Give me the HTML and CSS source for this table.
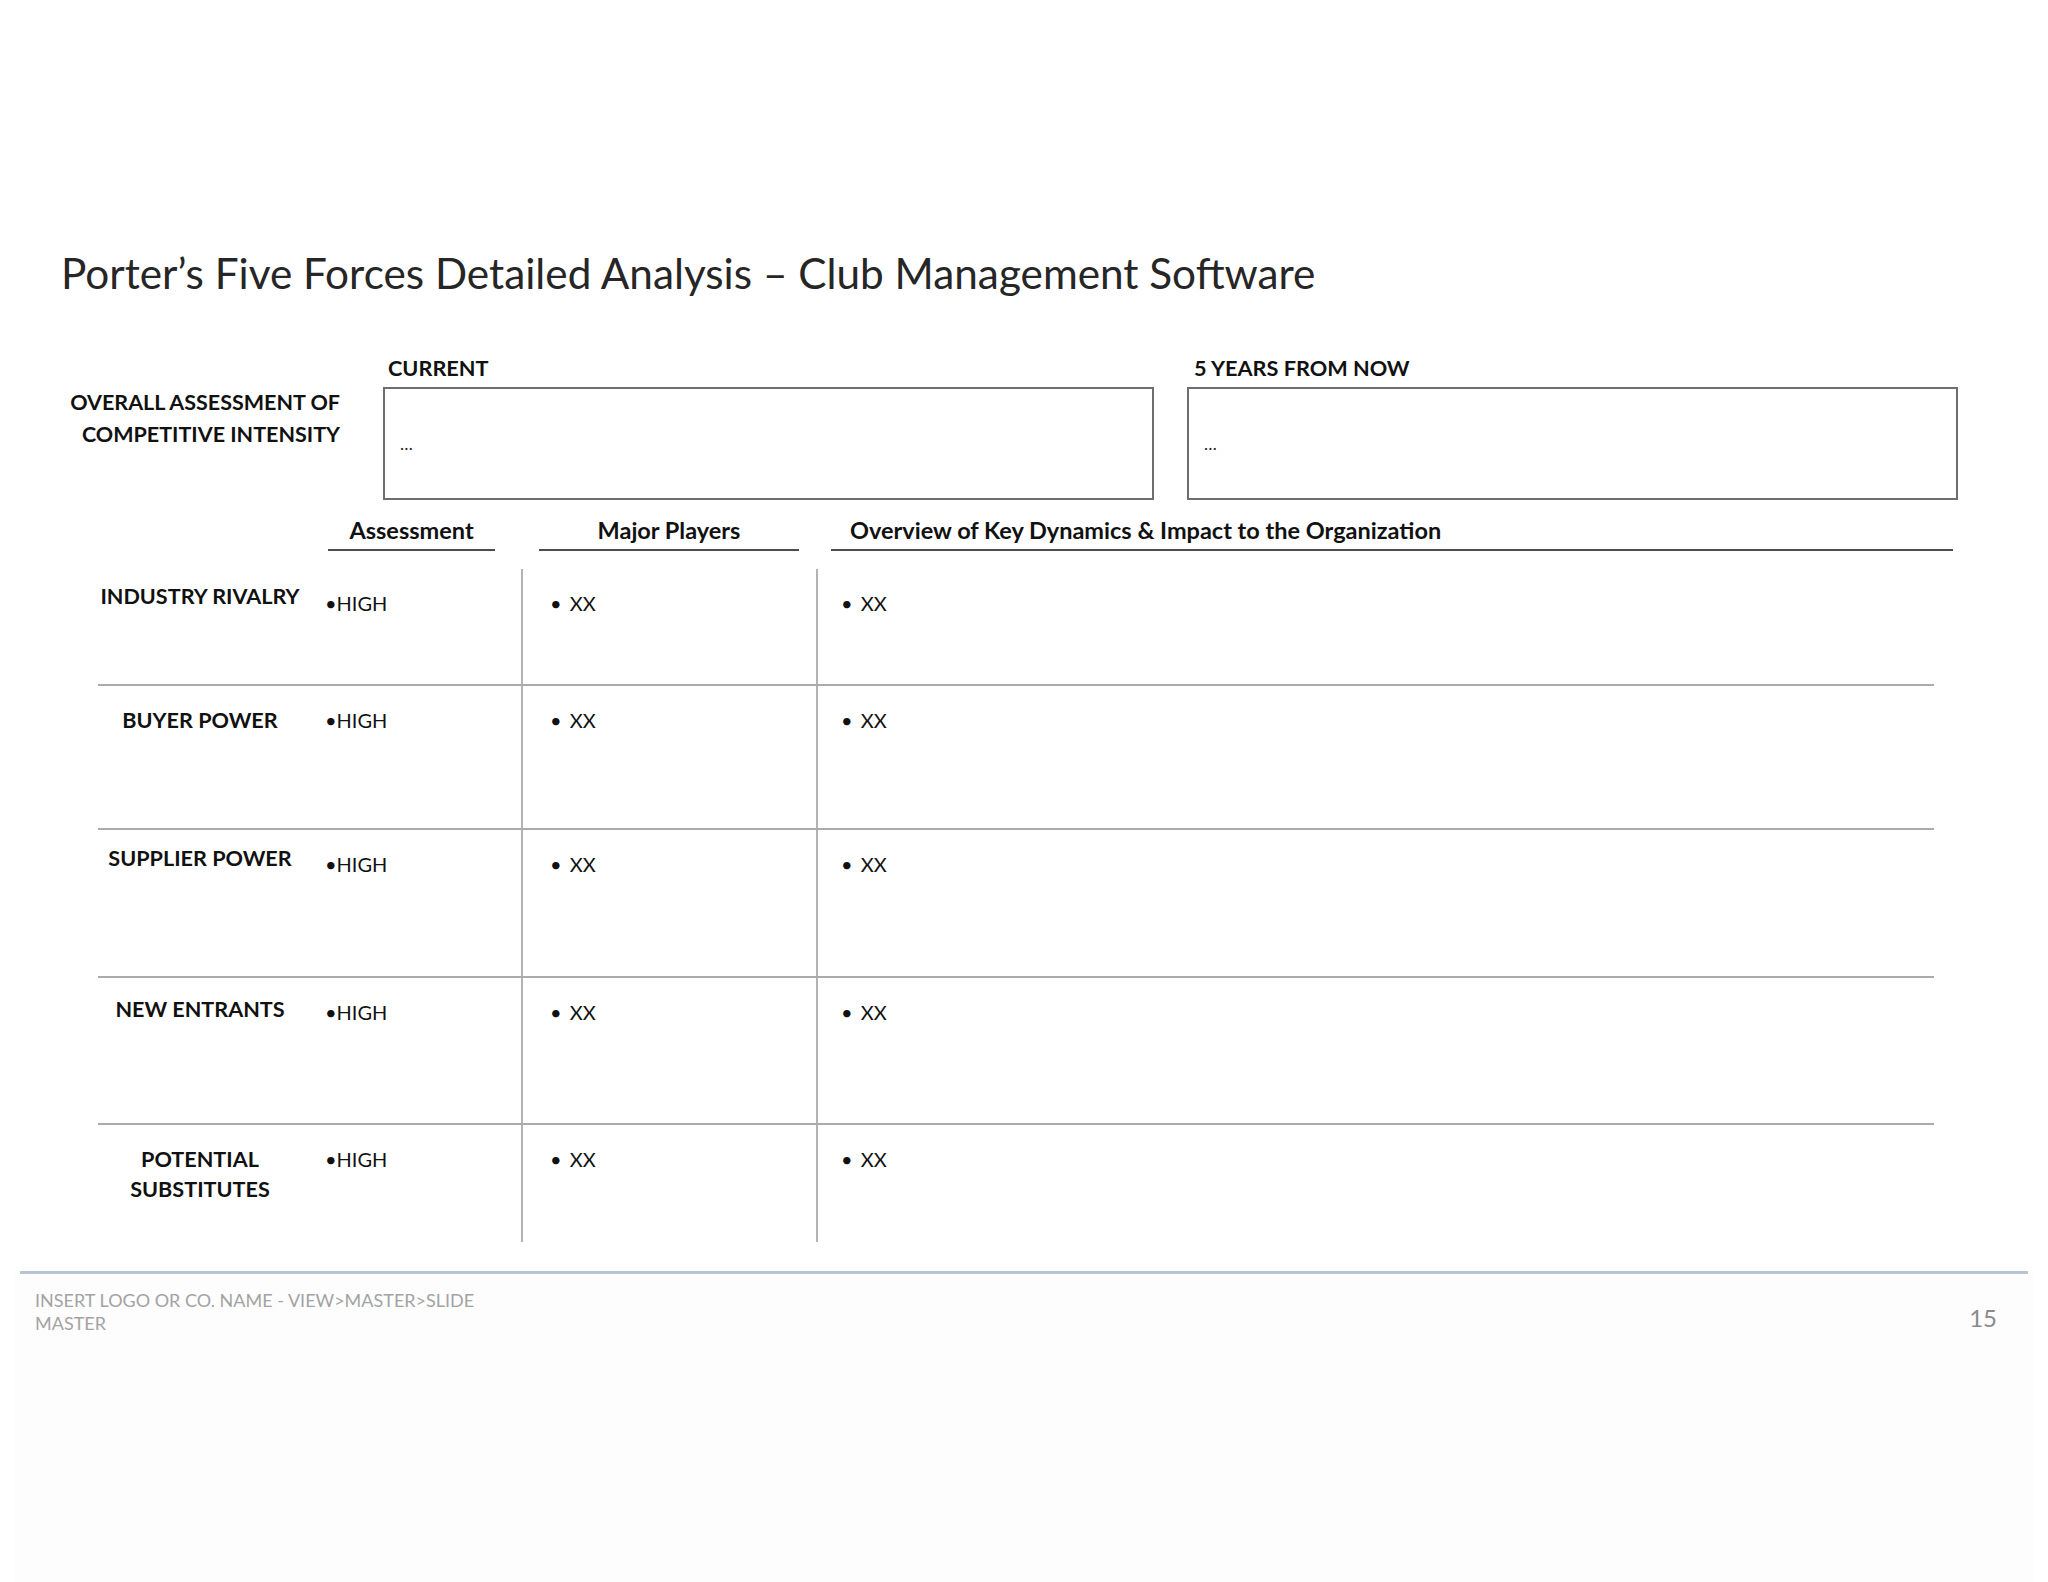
FILE: index.html
```html
<!DOCTYPE html>
<html>
<head>
<meta charset="utf-8">
<link rel="stylesheet" href="styles.css">
</head>
<body>
<div class="slide">
  <h1 class="title">Porter’s Five Forces Detailed Analysis – Club Management Software</h1>

  <div class="assess">
    <div class="assess-label">OVERALL ASSESSMENT OF<br>COMPETITIVE INTENSITY</div>
    <div class="assess-col first">
      <div class="col-title">CURRENT</div>
      <div class="box">…</div>
    </div>
    <div class="assess-col second">
      <div class="col-title">5 YEARS FROM NOW</div>
      <div class="box">…</div>
    </div>
  </div>

  <div class="heads">
    <div class="head h-assess">Assessment</div>
    <div class="head h-players">Major Players</div>
    <div class="head h-overview">Overview of Key Dynamics &amp; Impact to the Organization</div>
  </div>

  <div class="forces">
    <div class="row r1">
      <div class="cell label">INDUSTRY RIVALRY</div>
      <div class="cell level">•HIGH</div>
      <div class="cell players">• XX</div>
      <div class="cell overview">• XX</div>
    </div>
    <div class="row r2">
      <div class="cell label">BUYER POWER</div>
      <div class="cell level">•HIGH</div>
      <div class="cell players">• XX</div>
      <div class="cell overview">• XX</div>
    </div>
    <div class="row r3">
      <div class="cell label">SUPPLIER POWER</div>
      <div class="cell level">•HIGH</div>
      <div class="cell players">• XX</div>
      <div class="cell overview">• XX</div>
    </div>
    <div class="row r4">
      <div class="cell label">NEW ENTRANTS</div>
      <div class="cell level">•HIGH</div>
      <div class="cell players">• XX</div>
      <div class="cell overview">• XX</div>
    </div>
    <div class="row r5">
      <div class="cell label">POTENTIAL<br>SUBSTITUTES</div>
      <div class="cell level">•HIGH</div>
      <div class="cell players">• XX</div>
      <div class="cell overview">• XX</div>
    </div>
  </div>

  <div class="footer">
    <div class="footer-rule"></div>
    <div class="footer-body">
      <div class="footer-text">INSERT LOGO OR CO. NAME - VIEW&gt;MASTER&gt;SLIDE<br>MASTER</div>
      <div class="page-num">15</div>
    </div>
  </div>
</div>
</body>
</html>
```

FILE: styles.css
```css
* { box-sizing: border-box; }

html, body {
  margin: 0;
  padding: 0;
  background: #ffffff;
}

.slide {
  width: 2048px;
  height: 1582px;
  overflow: hidden;
  padding-top: 247px;
  font-family: Lato, "Liberation Sans", sans-serif;
  color: #111;
  background: #ffffff;
}

.title {
  margin: 0 0 0 61px;
  font-weight: 400;
  font-size: 42.3px;
  line-height: 52px;
  color: #262626;
  white-space: nowrap;
}

/* overall assessment */
.assess {
  display: flex;
  align-items: flex-start;
  margin-top: 56px;
}

.assess-label {
  width: 340px;
  margin-top: 31px;
  text-align: right;
  font-weight: 700;
  font-size: 21.5px;
  line-height: 32px;
  color: #111;
}

.assess-col {
  width: 771px;
}

.assess-col.first { margin-left: 43px; }
.assess-col.second { margin-left: 33px; }

.col-title {
  height: 26px;
  line-height: 26px;
  margin-bottom: 6px;
  font-weight: 700;
  font-size: 21.7px;
  color: #111;
}

.first .col-title { padding-left: 5px; }
.second .col-title { padding-left: 7px; }

.box {
  height: 113px;
  border: 2px solid #6e6e6e;
  display: flex;
  align-items: center;
  padding-left: 15px;
  font-size: 17px;
  color: #222;
}

/* column headers */
.heads {
  display: flex;
  margin-top: 16px;
  margin-left: 328px;
}

.head {
  line-height: 28px;
  padding-bottom: 5px;
  border-bottom: 2px solid #4d4d4d;
  font-weight: 700;
  font-size: 23.5px;
  color: #111;
  white-space: nowrap;
}

.h-assess { width: 167px; text-align: center; }
.h-players { width: 260px; margin-left: 44px; text-align: center; }
.h-overview { width: 1122px; margin-left: 32px; padding-left: 19px; }

/* forces table */
.forces {
  margin-top: 18px;
  margin-left: 98px;
  width: 1836px;
}

.row {
  display: grid;
  grid-template-columns: 204px 219px 295px 1118px;
}

.row + .row { border-top: 2px solid #ababab; }

.r1 { height: 115px; }
.r2 { height: 144px; }
.r3 { height: 148px; }
.r4 { height: 147px; }
.r5 { height: 119px; }

.cell {
  padding-top: 19px;
  font-size: 20px;
  line-height: 30px;
  color: #111;
}

.label {
  text-align: center;
  font-weight: 700;
  font-size: 21.6px;
  padding-top: 19px;
}

.r1 .label { padding-top: 12px; }
.r3 .label { padding-top: 13px; }
.r4 .label { padding-top: 16px; }

.level {
  padding-left: 23px;
}

.players {
  border-left: 2px solid #b3b3b3;
  padding-left: 27px;
  word-spacing: 3px;
}

.overview {
  border-left: 2px solid #b3b3b3;
  padding-left: 23px;
  word-spacing: 3px;
}

/* footer */
.footer {
  margin-top: 29px;
  margin-left: 15px;
  width: 2018px;
  height: 340px;
  background: #fdfdfd;
}

.footer-rule {
  margin-left: 5px;
  width: 2008px;
  height: 3px;
  background: #b6c4d3;
}

.footer-body {
  display: flex;
  justify-content: space-between;
  align-items: flex-start;
  padding-left: 20px;
  padding-right: 36px;
}

.footer-text {
  margin-top: 15px;
  font-size: 18px;
  line-height: 23px;
  color: #a3a3a3;
}

.page-num {
  margin-top: 29px;
  font-size: 24px;
  line-height: 30px;
  color: #8a8a8a;
}
```
